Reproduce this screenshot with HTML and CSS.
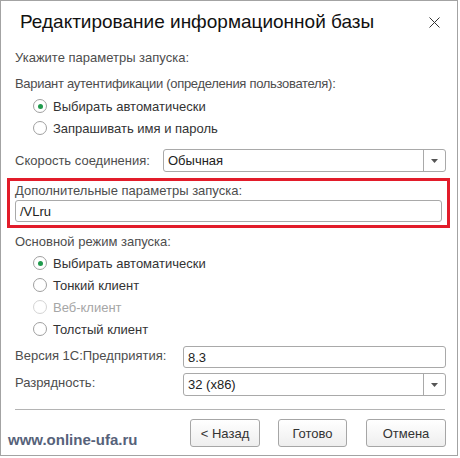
FILE: index.html
```html
<!DOCTYPE html>
<html lang="ru">
<head>
<meta charset="utf-8">
<link rel="stylesheet" href="styles.css">
</head>
<body>
<div class="window">
  <div class="header">
    <div class="title">Редактирование информационной базы</div>
    <svg class="close" width="11" height="11" viewBox="0 0 11 11"><path d="M0.5 0.5 L10.5 10.5 M10.5 0.5 L0.5 10.5" stroke="#333" stroke-width="1" fill="none"/></svg>
  </div>
  <div class="content">
    <div class="label row-first">Укажите параметры запуска:</div>
    <div class="label row-auth">Вариант аутентификации (определения пользователя):</div>
    <div class="radios r1">
      <div class="radio-row"><span class="radio checked"></span><span>Выбирать автоматически</span></div>
      <div class="radio-row"><span class="radio"></span><span>Запрашивать имя и пароль</span></div>
    </div>
    <div class="field-row speed">
      <div class="label flabel">Скорость соединения:</div>
      <div class="select"><span class="val">Обычная</span><span class="drop"><svg width="7" height="4" viewBox="0 0 7 4"><path d="M0 0 H7 L3.5 4 Z" fill="#555"/></svg></span></div>
    </div>
    <div class="highlight">
      <div class="label">Дополнительные параметры запуска:</div>
      <div class="input wide">/VLru</div>
    </div>
    <div class="label row-mode">Основной режим запуска:</div>
    <div class="radios r2">
      <div class="radio-row"><span class="radio checked"></span><span>Выбирать автоматически</span></div>
      <div class="radio-row"><span class="radio"></span><span>Тонкий клиент</span></div>
      <div class="radio-row disabled"><span class="radio"></span><span>Веб-клиент</span></div>
      <div class="radio-row"><span class="radio"></span><span>Толстый клиент</span></div>
    </div>
    <div class="field-row version">
      <div class="label flabel2">Версия 1С:Предприятия:</div>
      <div class="input grow">8.3</div>
    </div>
    <div class="field-row bits">
      <div class="label flabel2">Разрядность:</div>
      <div class="select"><span class="val">32 (x86)</span><span class="drop"><svg width="7" height="4" viewBox="0 0 7 4"><path d="M0 0 H7 L3.5 4 Z" fill="#555"/></svg></span></div>
    </div>
    <div class="sep"></div>
    <div class="buttons">
      <div class="btn b-back">&lt; Назад</div>
      <div class="btn b-done">Готово</div>
      <div class="btn b-cancel">Отмена</div>
    </div>
  </div>
  <div class="watermark">www.online-ufa.ru</div>
</div>
</body>
</html>
```
FILE: styles.css
```css
* { box-sizing: border-box; }
html, body { margin: 0; padding: 0; background: #fff; }
body { font-family: "Liberation Sans", Arial, sans-serif; font-size: 13px; color: #333; }
.window {
  position: relative;
  width: 458px;
  height: 456px;
  border: 1px solid #a3a3a3;
  background: #fff;
  overflow: hidden;
}
.header {
  height: 46px;
  display: flex;
  align-items: flex-start;
  justify-content: space-between;
}
.title {
  font-size: 19px;
  line-height: 24px;
  color: #111;
  padding: 9px 0 0 19px;
}
.close { margin: 16px 17px 0 0; }
.content { padding: 0 11px 0 14px; display: flex; flex-direction: column; }
.label { color: #4d4d4d; line-height: 20px; }
.row-first { margin-top: 1px; }
.row-auth { margin-top: 6px; letter-spacing: -0.3px; }
.radios { display: flex; flex-direction: column; padding-left: 18px; }
.r1 { margin-top: 1px; }
.radio-row { display: flex; align-items: center; height: 22px; color: #333; }
.radio {
  width: 14px; height: 14px; border-radius: 50%;
  border: 1px solid #a0a0a0; background: #fff;
  margin-right: 6px; display: flex; align-items: center; justify-content: center;
  flex: none;
}
.radio.checked::after {
  content: ""; width: 5px; height: 5px; border-radius: 50%; background: #1f9a4c;
}
.radio-row.disabled { color: #a6a6a6; }
.radio-row.disabled .radio { border-color: #d4d4d4; }
.field-row { display: flex; align-items: center; }
.speed { margin-top: 10px; }
.flabel { width: 148px; flex: none; }
.flabel2 { width: 168px; flex: none; align-self: flex-start; line-height: 20px; }
.select {
  flex: 1; height: 23px; display: flex; align-items: stretch;
  border: 1px solid #a9a9a9; border-radius: 3px; background: #fff;
}
.select .val { flex: 1; padding-left: 4px; display: flex; align-items: center; color: #222; }
.select .drop { width: 22px; border-left: 1px solid #a9a9a9; display: flex; align-items: center; justify-content: center; }
.input {
  height: 22px; border: 1px solid #a9a9a9; border-radius: 3px; background: #fff;
  padding-left: 4px; display: flex; align-items: center; color: #222;
}
.grow { flex: 1; }
.highlight {
  margin: 6px -4px 0 -8px;
  border: 3px solid #e21c2a;
  padding: 0 5px 3px 5px;
}
.highlight .label { line-height: 19px; }
.row-mode { margin-top: 4px; }
.r2 { margin-top: 0; }
.version { margin-top: 6px; height: 22px; }
.bits { margin-top: 5px; }
.sep { margin-top: 13px; height: 1px; background: #b4b4b4; margin-right: 1px; }
.buttons { display: flex; justify-content: flex-end; margin-top: 9px; }
.btn {
  height: 28px; border: 1px solid #a6a6a6; border-radius: 3px;
  background: linear-gradient(#ffffff, #eeeeee);
  display: flex; align-items: center; justify-content: center; color: #333;
}
.b-back { width: 70px; }
.b-done { width: 69px; margin-left: 18px; }
.b-cancel { width: 80px; margin-left: 19px; }
.watermark {
  position: absolute; left: 7px; top: 430px;
  font-weight: bold; font-size: 15px; color: #56627a;
}
```
